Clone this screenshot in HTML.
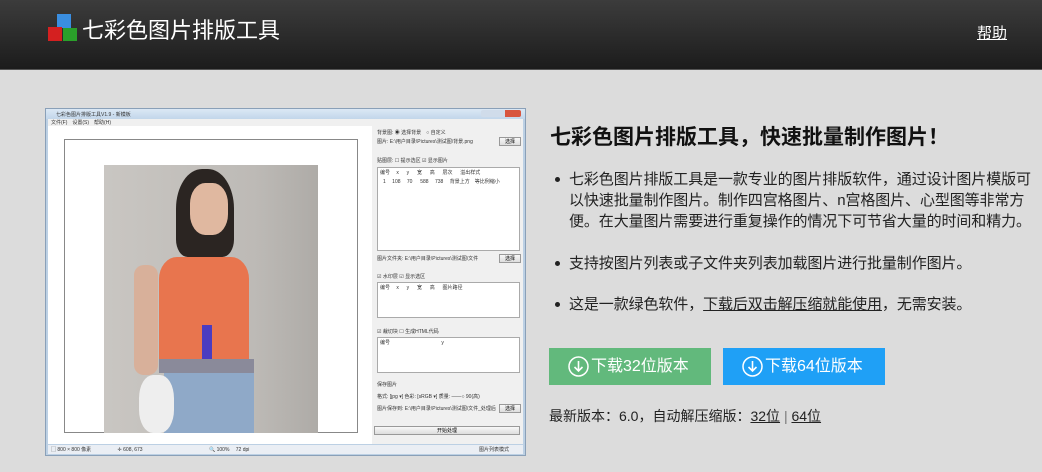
<!DOCTYPE html>
<html><head><meta charset="utf-8"><style>
*{margin:0;padding:0;box-sizing:border-box}
body{width:1042px;height:472px;overflow:hidden;background:#dcdcdc;font-family:"Liberation Sans","Noto Sans CJK SC",sans-serif;position:relative}
.hdr{position:absolute;left:0;top:0;width:1042px;height:70px;background:linear-gradient(#3c3c3c,#1c1c1c);border-bottom:1px solid #555}
.logo{position:absolute;left:82px;top:13px;color:#fff;font-size:22px;letter-spacing:0px}
.help{position:absolute;left:977px;top:22px;color:#fff;font-size:15px;text-decoration:underline}
.abs{position:absolute}
.win{left:45px;top:108px;width:481px;height:348px;background:#bcd0e4;border:1px solid #8aa0b8}
.t{font-size:5px;color:#333;position:absolute;white-space:nowrap}
.box{position:absolute;background:#fff;border:1px solid #aaa}
.btn{position:absolute;background:linear-gradient(#f8f8f8,#ddd);border:1px solid #999;font-size:5px;text-align:center;line-height:8px}
h1{position:absolute;left:550px;top:121px;font-size:21px;font-weight:bold;color:#111;white-space:nowrap}
.p{position:absolute;left:569px;font-size:15px;line-height:21px;color:#222;width:472px;letter-spacing:-0.1px}
.dot{position:absolute;left:555px;width:5px;height:5px;border-radius:50%;background:#222}
.dl{position:absolute;top:348px;width:162px;height:37px;color:#fff;font-size:16px;line-height:37px}
.dl span{position:absolute;left:42px}
.dl svg{position:absolute;left:19px;top:8px}
</style></head><body>
<div class="hdr">
 <svg class="abs" style="left:47px;top:13px" width="34" height="32">
  <rect x="10" y="1" width="14" height="14" fill="#3a8ee0"/><rect x="1" y="14" width="14" height="14" fill="#d42020"/><rect x="16" y="15" width="14" height="13" fill="#2aa02a"/>
 </svg>
 <div class="logo">七彩色图片排版工具</div>
 <div class="help">帮助</div>
</div>

<div class="abs win">
 <div class="abs" style="left:0;top:0;width:479px;height:10px;background:linear-gradient(#dbe8f5,#c2d6ea)"></div>
 <div class="t" style="left:10px;top:2px">七彩色图片排版工具V1.9 - 新模板</div>
 <div class="abs" style="left:435px;top:1px;width:40px;height:7px;background:linear-gradient(90deg,#d0dcea 60%,#d8553e 60%);border-radius:2px"></div>
 <div class="abs" style="left:2px;top:10px;width:475px;height:7px;background:#f0f0f0"></div>
 <div class="t" style="left:5px;top:10px">文件(F)　设置(S)　帮助(H)</div>
 <div class="abs" style="left:2px;top:17px;width:324px;height:318px;background:#fff"></div>
 <div class="abs" style="left:18px;top:30px;width:294px;height:294px;border:1px solid #888;background:#fff"></div>
 <div class="abs" style="left:58px;top:56px;width:214px;height:268px;background:linear-gradient(90deg,#c9c6c2,#bdbab6 70%,#aeaba7);overflow:hidden">
  <div class="abs" style="left:72px;top:4px;width:58px;height:88px;background:#2b2522;border-radius:45% 45% 20% 20%"></div>
  <div class="abs" style="left:86px;top:18px;width:38px;height:52px;background:#e0b8a0;border-radius:40%"></div>
  <div class="abs" style="left:55px;top:92px;width:90px;height:110px;background:#e8754e;border-radius:20% 20% 5% 5%"></div>
  <div class="abs" style="left:55px;top:194px;width:95px;height:14px;background:#8a8a9a"></div>
  <div class="abs" style="left:60px;top:208px;width:90px;height:60px;background:#8fa9c8"></div>
  <div class="abs" style="left:30px;top:100px;width:24px;height:110px;background:#d8b09a;border-radius:10px"></div>
  <div class="abs" style="left:35px;top:210px;width:35px;height:58px;background:#eee;border-radius:40%"></div>
  <div class="abs" style="left:98px;top:160px;width:10px;height:34px;background:#4a3cc0"></div>
 </div>
 <div class="abs" style="left:326px;top:17px;width:151px;height:318px;background:#f0f0f0"></div>
 <div class="t" style="left:331px;top:20px">背景图: ◉ 选择背景　○ 自定义</div>
 <div class="t" style="left:331px;top:29px">图片: E:\用户目录\Pictures\测试图\背景.png</div>
 <div class="btn" style="left:453px;top:28px;width:22px;height:9px">选择</div>
 <div class="t" style="left:331px;top:48px">贴图层: ☐ 提示选区 ☑ 显示图片</div>
 <div class="box" style="left:331px;top:58px;width:143px;height:84px"></div>
 <div class="t" style="left:334px;top:60px">编号　 x 　 y 　 宽 　 高 　 层次 　 溢出样式</div>
 <div class="t" style="left:337px;top:69px">1　 108 　70 　 588 　738 　背景上方　等比例缩小</div>
 <div class="t" style="left:331px;top:146px">图片文件夹: E:\用户目录\Pictures\测试图\文件</div>
 <div class="btn" style="left:453px;top:145px;width:22px;height:9px">选择</div>
 <div class="t" style="left:331px;top:164px">☑ 水印层 ☑ 显示选区</div>
 <div class="box" style="left:331px;top:173px;width:143px;height:36px"></div>
 <div class="t" style="left:334px;top:175px">编号　 x 　 y 　 宽 　 高 　 图片路径</div>
 <div class="t" style="left:331px;top:219px">☑ 裁切块 ☐ 生成HTML代码</div>
 <div class="box" style="left:331px;top:228px;width:143px;height:36px"></div>
 <div class="t" style="left:334px;top:230px">编号　　　　　　　　　　 y</div>
 <div class="t" style="left:331px;top:272px">保存图片</div>
 <div class="t" style="left:331px;top:284px">格式: [jpg ▾] 色彩: [sRGB ▾] 质量: ——○ 90(高)</div>
 <div class="t" style="left:331px;top:296px">图片保存到: E:\用户目录\Pictures\测试图\文件_处理后</div>
 <div class="btn" style="left:453px;top:295px;width:22px;height:9px">选择</div>
 <div class="btn" style="left:328px;top:317px;width:146px;height:9px">开始处理</div>
 <div class="abs" style="left:2px;top:336px;width:475px;height:9px;background:#eaeef4"></div>
 <div class="t" style="left:5px;top:337px">▢ 800 × 800 像素　　　　　 ✛ 608, 673　　　　　　　　　　　　　 🔍 100%　 72 dpi</div>
 <div class="t" style="left:433px;top:337px">图片列表模式</div>
</div>

<h1>七彩色图片排版工具，快速批量制作图片！</h1>
<div class="dot" style="top:177px"></div>
<div class="p" style="top:169px">七彩色图片排版工具是一款专业的图片排版软件，通过设计图片模版可以快速批量制作图片。制作四宫格图片、n宫格图片、心型图等非常方便。在大量图片需要进行重复操作的情况下可节省大量的时间和精力。</div>
<div class="dot" style="top:261px"></div>
<div class="p" style="top:253px">支持按图片列表或子文件夹列表加载图片进行批量制作图片。</div>
<div class="dot" style="top:302px"></div>
<div class="p" style="top:294px">这是一款绿色软件，<u>下载后双击解压缩就能使用</u>，无需安装。</div>

<div class="dl" style="left:549px;background:#62b97c"><svg width="21" height="21"><circle cx="10.5" cy="10.5" r="9.5" fill="none" stroke="#fff" stroke-width="1.5"/><path d="M10.5 5v10M6.5 11l4 4 4-4" fill="none" stroke="#fff" stroke-width="1.6"/></svg><span>下载32位版本</span></div>
<div class="dl" style="left:723px;background:#1fa0f6"><svg width="21" height="21"><circle cx="10.5" cy="10.5" r="9.5" fill="none" stroke="#fff" stroke-width="1.5"/><path d="M10.5 5v10M6.5 11l4 4 4-4" fill="none" stroke="#fff" stroke-width="1.6"/></svg><span>下载64位版本</span></div>

<div class="abs" style="left:549px;top:406px;font-size:14px;color:#222;white-space:nowrap">最新版本：6.0，自动解压缩版：<u>32位</u> <span style="color:#777">|</span> <u>64位</u></div>
</body></html>
